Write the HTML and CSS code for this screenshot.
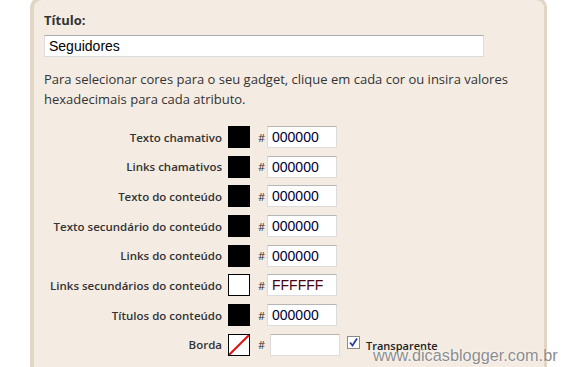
FILE: index.html
```html
<!DOCTYPE html>
<html>
<head>
<meta charset="utf-8">
<link rel="stylesheet" href="styles.css">
</head>
<body>
<div class="panel">
  <div class="title-label">Título:</div>
  <div class="title-input">Seguidores</div>
  <p class="desc">Para selecionar cores para o seu gadget, clique em cada cor ou insira valores hexadecimais para cada atributo.</p>
  <div class="rows">
    <div class="row"><span class="label">Texto chamativo</span><span class="swatch black"></span><span class="hash">#</span><span class="hex">000000</span></div>
    <div class="row"><span class="label">Links chamativos</span><span class="swatch black"></span><span class="hash">#</span><span class="hex">000000</span></div>
    <div class="row"><span class="label">Texto do conteúdo</span><span class="swatch black"></span><span class="hash">#</span><span class="hex">000000</span></div>
    <div class="row"><span class="label">Texto secundário do conteúdo</span><span class="swatch black"></span><span class="hash">#</span><span class="hex">000000</span></div>
    <div class="row"><span class="label">Links do conteúdo</span><span class="swatch black"></span><span class="hash">#</span><span class="hex">000000</span></div>
    <div class="row"><span class="label">Links secundários do conteúdo</span><span class="swatch white"></span><span class="hash">#</span><span class="hex maroon">FFFFFF</span></div>
    <div class="row"><span class="label">Títulos do conteúdo</span><span class="swatch black"></span><span class="hash">#</span><span class="hex">000000</span></div>
    <div class="row"><span class="label">Borda</span><span class="swatch none"><svg width="20" height="20" viewBox="0 0 20 20"><line x1="0" y1="20" x2="20" y2="0" stroke="#e01010" stroke-width="2"/></svg></span><span class="hash">#</span><span class="hex empty"></span><span class="check"><svg width="11" height="11" viewBox="0 0 11 11"><path d="M2 5.5 L4.5 8.5 L9 1.5" fill="none" stroke="#2a3f9e" stroke-width="1.8"/></svg></span><span class="transp">Transparente</span></div>
  </div>
</div>
<div class="watermark">www.dicasblogger.com.br</div>
</body>
</html>
```
FILE: styles.css
```css
html, body {
  margin: 0;
  padding: 0;
  background: #ffffff;
  width: 567px;
  height: 367px;
  overflow: hidden;
}
body {
  position: relative;
  font-family: "Open Sans", "DejaVu Sans", sans-serif;
  color: #333333;
}
.panel {
  margin: -4px 0 0 30px;
  width: 500px;
  height: 362px;
  background: #f4ece3;
  border-left: 4px solid #e1d6c4;
  border-right: 3px solid #e1d6c4;
  border-top: 4px solid #e1d6c4;
  border-radius: 12px 12px 0 0;
  padding: 11px 0 0 10px;
  box-sizing: content-box;
  overflow: hidden;
}
.title-label {
  font-weight: bold;
  font-size: 13px;
  line-height: 18px;
  color: #333;
}
.title-input {
  margin-top: 6px;
  width: 434px;
  height: 20px;
  background: #fff;
  border: 1px solid #dcdcdc;
  border-top-color: #ababab;
  font-family: "Liberation Sans", Arial, sans-serif;
  font-size: 14px;
  line-height: 20px;
  padding-left: 4px;
  color: #000;
}
.desc {
  margin: 12px 0 0 0;
  font-size: 13px;
  line-height: 20px;
  width: 480px;
  color: #333;
}
.rows {
  margin-top: 17px;
  display: flex;
  flex-direction: column;
  gap: 7.7px;
}
.row {
  display: flex;
  align-items: center;
  height: 22px;
}
.label {
  width: 178px;
  text-align: right;
  font-size: 11.5px;
  font-weight: 600;
  color: #333;
  margin-right: 6px;
  white-space: nowrap;
}
.swatch {
  width: 20px;
  height: 20px;
  border: 1px solid #000;
  display: inline-block;
}
.swatch.black { background: #000; }
.swatch.white { background: #fff; }
.swatch.none { background: #fff; }
.swatch svg { display: block; }
.hash {
  font-size: 11px;
  margin-left: 8px;
  width: 9px;
  color: #333;
}
.hex {
  width: 64px;
  height: 20px;
  background: #fff;
  border: 1px solid #dcdcdc;
  border-top-color: #b5b5b5;
  padding-left: 4px;
  font-family: "Liberation Sans", Arial, sans-serif;
  font-size: 14px;
  line-height: 20px;
  color: #000033;
}
.hex.maroon { color: #4a0010; }
.hex.empty { margin-left: 3px; }
.check {
  margin-left: 7px;
  width: 11px;
  height: 11px;
  border: 1px solid #8a8a8a;
  background: #fff;
  align-self: flex-start;
  margin-top: 2px;
}
.check svg { display: block; }
.transp {
  margin-left: 6px;
  font-size: 11px;
  font-weight: 600;
  color: #222;
  align-self: flex-start;
  margin-top: 4px;
}
.watermark {
  position: absolute;
  left: 373px;
  top: 346px;
  font-family: "Liberation Sans", Arial, sans-serif;
  font-size: 16.3px;
  color: #8c8c8c;
  text-shadow: 0 0 2px #fff, 0 0 1px #fff;
}
```
